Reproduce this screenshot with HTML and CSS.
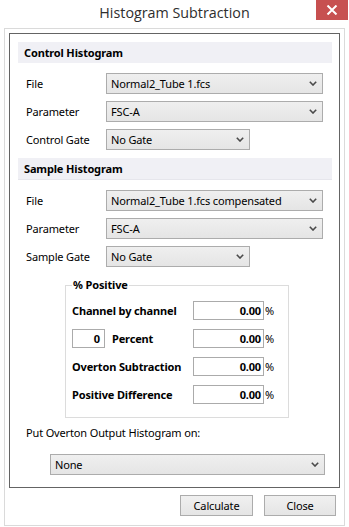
FILE: index.html
```html
<!DOCTYPE html>
<html>
<head>
<meta charset="utf-8">
<link rel="stylesheet" href="styles.css">
</head>
<body>
<div class="titlebar">
  <div></div>
  <div class="title">Histogram Subtraction</div>
  <div class="close"><svg width="12" height="10" viewBox="0 0 12 10"><path d="M1.5 0.5 L10.5 9.5 M10.5 0.5 L1.5 9.5" stroke="#fff" stroke-width="2"/></svg></div>
</div>
<div class="client">
  <div class="frame">
    <div class="header hdr-control">Control Histogram</div>
    <div class="rows">
      <div class="label">File</div>
      <div class="combo wide"><span>Normal2_Tube 1.fcs</span><svg class="chev" width="8" height="5" viewBox="0 0 8 5"><polyline points="0.8,0.8 4,4 7.2,0.8" fill="none" stroke="#4a4a4a" stroke-width="1.6"/></svg></div>
      <div class="label">Parameter</div>
      <div class="combo wide"><span>FSC-A</span><svg class="chev" width="8" height="5" viewBox="0 0 8 5"><polyline points="0.8,0.8 4,4 7.2,0.8" fill="none" stroke="#4a4a4a" stroke-width="1.6"/></svg></div>
      <div class="label">Control Gate</div>
      <div class="combo narrow"><span>No Gate</span><svg class="chev" width="8" height="5" viewBox="0 0 8 5"><polyline points="0.8,0.8 4,4 7.2,0.8" fill="none" stroke="#4a4a4a" stroke-width="1.6"/></svg></div>
    </div>
    <div class="header hdr-sample">Sample Histogram</div>
    <div class="rows rows-sample">
      <div class="label">File</div>
      <div class="combo wide"><span>Normal2_Tube 1.fcs compensated</span><svg class="chev" width="8" height="5" viewBox="0 0 8 5"><polyline points="0.8,0.8 4,4 7.2,0.8" fill="none" stroke="#4a4a4a" stroke-width="1.6"/></svg></div>
      <div class="label">Parameter</div>
      <div class="combo wide"><span>FSC-A</span><svg class="chev" width="8" height="5" viewBox="0 0 8 5"><polyline points="0.8,0.8 4,4 7.2,0.8" fill="none" stroke="#4a4a4a" stroke-width="1.6"/></svg></div>
      <div class="label">Sample Gate</div>
      <div class="combo narrow"><span>No Gate</span><svg class="chev" width="8" height="5" viewBox="0 0 8 5"><polyline points="0.8,0.8 4,4 7.2,0.8" fill="none" stroke="#4a4a4a" stroke-width="1.6"/></svg></div>
    </div>
    <fieldset class="group">
      <legend>% Positive</legend>
      <div class="grid">
        <div class="glabel">Channel by channel</div>
        <div class="tbox">0.00</div>
        <div class="pct">%</div>
        <div class="glabel pctrow"><div class="tbox small">0</div><span>Percent</span></div>
        <div class="tbox">0.00</div>
        <div class="pct">%</div>
        <div class="glabel">Overton Subtraction</div>
        <div class="tbox">0.00</div>
        <div class="pct">%</div>
        <div class="glabel">Positive Difference</div>
        <div class="tbox">0.00</div>
        <div class="pct">%</div>
      </div>
    </fieldset>
    <div class="put">Put Overton Output Histogram on:</div>
    <div class="combo none"><span>None</span><svg class="chev" width="8" height="5" viewBox="0 0 8 5"><polyline points="0.8,0.8 4,4 7.2,0.8" fill="none" stroke="#4a4a4a" stroke-width="1.6"/></svg></div>
  </div>
  <div class="buttons">
    <div class="btn calc">Calculate</div>
    <div class="btn closebtn">Close</div>
  </div>
</div>
</body>
</html>
```
FILE: styles.css
```css
html, body {
  margin: 0;
  padding: 0;
}
body {
  width: 349px;
  height: 527px;
  background: #ffffff;
  font-family: "Noto Sans", "Open Sans", sans-serif;
  font-size: 11px;
  letter-spacing: -0.15px;
  color: #000;
  overflow: hidden;
}
.titlebar {
  height: 28px;
  display: grid;
  grid-template-columns: 1fr auto 1fr;
}
.title {
  font-size: 14.3px;
  line-height: 26px;
  letter-spacing: 0;
  color: #2e2e2e;
  font-family: "Open Sans", "Noto Sans", sans-serif;
}
.close {
  justify-self: end;
  align-self: start;
  width: 32px;
  height: 20px;
  margin-right: 1px;
  background: #c75050;
  display: flex;
  align-items: center;
  justify-content: center;
}
.client {
  margin: 0 4px;
  height: 496px;
  border: 1px solid #dadada;
}
.frame {
  margin: 4px 4px 0 4px;
  border: 1px solid #646464;
  padding: 8px 7px 12px 8px;
}
.header {
  height: 21px;
  line-height: 21px;
  background: #f0f0f5;
  padding-left: 6px;
  font-weight: bold;
}
.hdr-sample {
  margin-top: 8px;
  border-bottom: 1px solid #e6e6ec;
  height: 21px;
}
.rows {
  display: grid;
  grid-template-columns: 80px auto;
  row-gap: 7px;
  margin-top: 10px;
  padding-left: 8px;
  justify-items: start;
}
.rows-sample {
  margin-top: 10px;
}
.label {
  line-height: 21px;
}
.combo {
  box-sizing: border-box;
  height: 21px;
  border: 1px solid #acacac;
  background: linear-gradient(#efefef, #e5e5e5);
  display: flex;
  align-items: center;
  justify-content: space-between;
  padding: 0 5px 0 4px;
}
.combo span {
  line-height: 19px;
}
.wide {
  width: 217px;
}
.narrow {
  width: 144px;
}
.chev {
  display: block;
}
.group {
  margin: 11px 0 0 47px;
  width: 224px;
  box-sizing: border-box;
  border: 1px solid #dcdcdc;
  padding: 9px 0 13px 6px;
  font-weight: bold;
}
.group legend {
  padding: 0 1px;
  line-height: 14px;
}
.grid {
  display: grid;
  grid-template-columns: 121px 71px auto;
  row-gap: 9px;
  align-items: center;
}
.tbox {
  box-sizing: border-box;
  height: 19px;
  border: 1px solid #ababab;
  background: #fff;
  text-align: right;
  padding-right: 2px;
  line-height: 17px;
}
.small {
  width: 33px;
  padding-right: 4px;
}
.pctrow {
  display: flex;
  align-items: center;
  gap: 7px;
}
.pct {
  font-weight: normal;
  padding-left: 1px;
}
.put {
  margin-top: 7px;
  padding-left: 8px;
  line-height: 16px;
}
.none {
  margin: 13px 0 0 32px;
  width: 275px;
}
.buttons {
  display: flex;
  justify-content: flex-end;
  gap: 11px;
  margin: 7px 8px 0 0;
}
.btn {
  box-sizing: border-box;
  height: 21px;
  border: 1px solid #acacac;
  background: linear-gradient(#f0f0f0, #e5e5e5);
  text-align: center;
  line-height: 19px;
}
.calc {
  width: 73px;
}
.closebtn {
  width: 72px;
}
```
